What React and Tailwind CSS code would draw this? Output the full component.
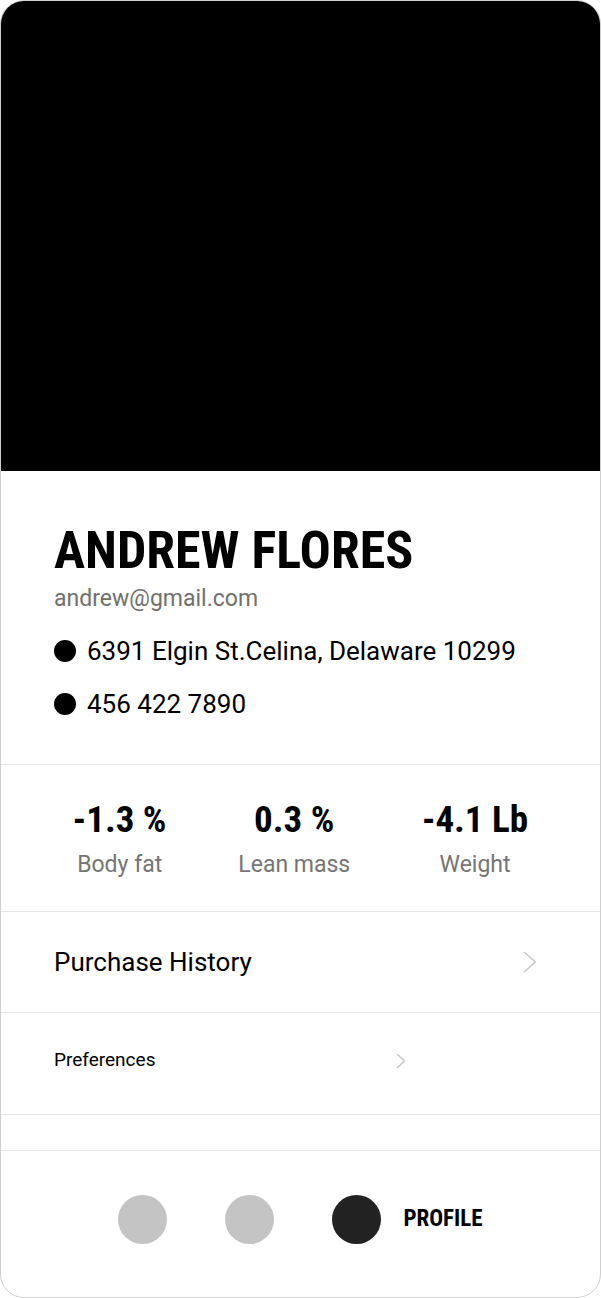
const STATS = [
  { value: '-1.3 %', label: 'Body fat' },
  { value: '0.3 %', label: 'Lean mass' },
  { value: '-4.1 Lb', label: 'Weight' },
]

const condensed = "font-['Roboto_Condensed','Roboto',sans-serif] font-stretch-condensed"

function Dot() {
  return <span className="w-[22px] h-[22px] rounded-full bg-black shrink-0" />
}

function Chevron({ w, h }) {
  return (
    <svg width={w} height={h} viewBox={`0 0 ${w} ${h}`} fill="none" className="shrink-0">
      <polyline
        points={`1.5,1.5 ${w - 1.5},${h / 2} 1.5,${h - 1.5}`}
        stroke="#c8c8c8"
        strokeWidth="1.6"
        strokeLinecap="round"
        strokeLinejoin="round"
      />
    </svg>
  )
}

export default function App() {
  return (
    <div className="w-[601px] h-[1298px] bg-white font-['Roboto',sans-serif]">
      <div className="h-full flex flex-col rounded-[24px] border border-[#cfcfcf] overflow-hidden">
        {/* Cover */}
        <div className="h-[470px] bg-black shrink-0" />

        {/* Profile info */}
        <div className="px-[53px] pt-[50px] h-[293px] shrink-0">
          <h1 className={`${condensed} text-[52px] leading-[60px] font-bold text-black`}>ANDREW FLORES</h1>
          <p className="text-[23px] leading-[28px] text-[#707070] mt-[4px]">andrew@gmail.com</p>
          <div className="mt-[24px] flex flex-col gap-[25px]">
            <div className="flex items-center gap-[11px]">
              <Dot />
              <span className="text-[26px] leading-[28px] text-black">6391 Elgin St.Celina, Delaware 10299</span>
            </div>
            <div className="flex items-center gap-[11px]">
              <Dot />
              <span className="text-[26px] leading-[28px] text-black">456 422 7890</span>
            </div>
          </div>
        </div>

        {/* Stats */}
        <div className="h-[147px] shrink-0 border-t border-[#e6e6e6] flex items-center justify-evenly">
          {STATS.map(s => (
            <div key={s.label} className="flex flex-col items-center translate-y-[1px]">
              <span className={`${condensed} text-[37px] leading-[42px] font-bold text-black`}>{s.value}</span>
              <span className="text-[23px] leading-[28px] text-[#757575] mt-[10px]">{s.label}</span>
            </div>
          ))}
        </div>

        {/* Menu */}
        <div className="h-[101px] shrink-0 border-t border-[#e6e6e6] flex items-center justify-between pl-[53px] pr-[63px]">
          <span className="text-[26px] text-black">Purchase History</span>
          <Chevron w={14} h={22} />
        </div>
        <div className="h-[102px] shrink-0 border-t border-[#e6e6e6] flex items-center pl-[53px] pb-[6px]">
          <div className="w-[352px] flex items-center justify-between">
            <span className="text-[19px] text-black">Preferences</span>
            <Chevron w={10} h={16} />
          </div>
        </div>
        <div className="h-[36px] shrink-0 border-t border-[#e6e6e6]" />

        {/* Bottom nav */}
        <div className="flex-1 border-t border-[#e6e6e6] flex items-center justify-center gap-[58px] pb-[9px]">
          <span className="w-[49px] h-[49px] rounded-full bg-[#c4c4c4]" />
          <span className="w-[49px] h-[49px] rounded-full bg-[#c4c4c4]" />
          <div className="flex items-center gap-[22px]">
            <span className="w-[49px] h-[49px] rounded-full bg-[#222222]" />
            <span className={`${condensed} text-[23px] font-bold text-black`}>PROFILE</span>
          </div>
        </div>
      </div>
    </div>
  )
}
